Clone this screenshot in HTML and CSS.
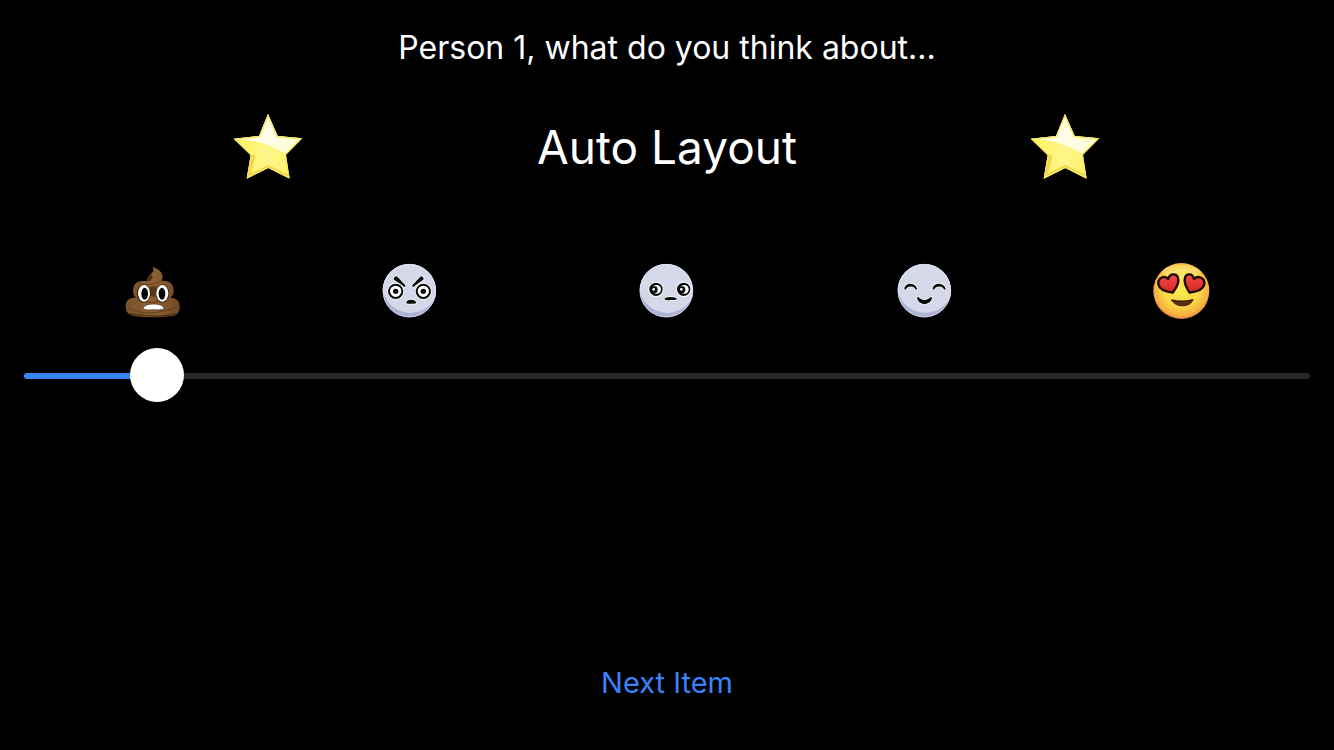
FILE: index.html
```html
<!DOCTYPE html>
<html lang="en">
<head>
<meta charset="utf-8">
<meta name="viewport" content="width=device-width, initial-scale=1">
<title>Auto Layout</title>
<link rel="stylesheet" href="styles.css">
</head>
<body>
<svg class="defs" aria-hidden="true">
  <defs>
    <linearGradient id="gold" x1="0" x2="1" y1="0" y2="0"><stop offset="0" stop-color="#fff25c"/><stop offset=".5" stop-color="#fff68a"/><stop offset="1" stop-color="#fff05c"/></linearGradient>
    <linearGradient id="shine" x1="0" x2="1" y1="0" y2="0"><stop offset="0" stop-color="#fffbe0"/><stop offset=".5" stop-color="#fffde6"/><stop offset="1" stop-color="#fffbd0"/></linearGradient>
    <radialGradient id="sun" cx=".5" cy=".45" r=".55"><stop offset="0" stop-color="#fbe94e"/><stop offset=".6" stop-color="#f9d745"/><stop offset=".88" stop-color="#f5b040"/><stop offset="1" stop-color="#ee8448"/></radialGradient>
    <linearGradient id="heart" x1="0" x2="0" y1="0" y2="1"><stop offset="0" stop-color="#f04a48"/><stop offset="1" stop-color="#d92323"/></linearGradient>
    <linearGradient id="brown" x1="0" x2="1" y1="0" y2="0"><stop offset="0" stop-color="#7a5129"/><stop offset=".5" stop-color="#8c6034"/><stop offset="1" stop-color="#734a23"/></linearGradient>
    <clipPath id="disc"><circle cx="112" cy="107" r="80"/></clipPath>
    <clipPath id="starshape"><path d="M131 27L160 93L234 100L185 149L196 221L132 189L67 221L79 151L28 101L104 93Z"/></clipPath>
  </defs>
  <symbol id="star" viewBox="26 24 210 201">
    <g clip-path="url(#starshape)">
      <path d="M26 24H236V225H26Z" fill="url(#gold)"/>
      <path d="M28 104Q112 100 185 149L240 95L131 20Z" fill="url(#shine)"/>
      <path d="M86 150L67 221L132 189L194 219" fill="none" stroke="#f3d44b" stroke-width="16"/>
      <path d="M131 27L160 93L234 100L185 149L196 221L132 189L67 221L79 151L28 101L104 93Z" fill="none" stroke="#f6e65b" stroke-width="8"/>
    </g>
  </symbol>
  <symbol id="moon" viewBox="0 0 225 225">
    <circle cx="112" cy="107" r="80" fill="#aeb1d4"/>
    <g clip-path="url(#disc)"><circle cx="115" cy="90" r="84" fill="#d5d8e9"/></g>
    <circle cx="112" cy="107" r="79" fill="none" stroke="#e6e8f3" stroke-width="2"/>
  </symbol>
</svg>
<main class="screen">
  <p class="prompt">Person 1, what do you think about...</p>
  <div class="subject">
    <svg class="star" aria-hidden="true"><use href="#star"/></svg>
    <h1 class="title" id="item">Auto Layout</h1>
    <svg class="star" aria-hidden="true"><use href="#star"/></svg>
  </div>
  <div class="faces">
    <svg class="face" viewBox="0 0 225 225" role="img" aria-label="Terrible">
      <path d="M113 36C140 45 148 60 140 78C162 75 175 88 175 101C178 113 173 123 166 128C186 129 194 139 194 153C195 174 184 184 163 184Q112 190 59 183C40 181 31 171 32 151C33 136 43 127 63 128C51 121 51 91 66 82C77 76 89 79 98 77Q94 65 114 51C117 45 113 41 113 36Z" fill="url(#brown)"/>
      <path d="M98 77Q93 65 109 58Q116 65 108 76Q102 80 92 78Z" fill="#543311"/>
      <path d="M69 83Q94 98 139 78M64 128Q91 150 132 139Q151 133 169 126M37 158Q83 181 133 171Q163 166 189 155" fill="none" stroke="#65411c" stroke-width="3"/>
      <path d="M104 96L124 93L119 127L105 122Z" fill="#573613"/>
      <path d="M41 176Q81 182 112 183Q153 185 184 177" fill="none" stroke="#4a2f16" stroke-width="4"/>
      <ellipse cx="86" cy="115" rx="21" ry="28" fill="#4b2c0c"/><ellipse cx="142" cy="115" rx="21" ry="28" fill="#4b2c0c"/>
      <ellipse cx="87" cy="115" rx="18" ry="25" fill="#fff"/><ellipse cx="142" cy="115" rx="18" ry="25" fill="#fff"/>
      <ellipse cx="89" cy="116" rx="10" ry="18" fill="#050505"/><ellipse cx="141" cy="116" rx="10" ry="18" fill="#050505"/>
      <path d="M83 162Q87 147 116 147Q145 147 148 162Q131 166 115 164Q97 167 83 162Z" fill="#fff" stroke="#4b2c0c" stroke-width="2"/>
    </svg>
    <svg class="face" viewBox="0 0 225 225" role="img" aria-label="Bad">
      <use href="#moon"/>
      <g stroke="#fff" stroke-width="4" paint-order="stroke">
        <path d="M66 68Q71 60 77 66L100 91Q103 97 96 95Q84 86 68 76Q63 73 66 68Z" fill="#0a0a0a"/>
        <path d="M154 68Q150 60 144 66L121 91Q118 97 125 95Q137 86 152 76Q157 73 154 68Z" fill="#0a0a0a"/>
        <path d="M102 144Q104 134 117 134Q131 134 133 144Q132 147 117 146Q103 147 102 144Z" fill="#0a0a0a"/>
      </g>
      <circle cx="71" cy="109" r="25" fill="#fff"/><circle cx="154" cy="109" r="25" fill="#fff"/>
      <circle cx="71" cy="109" r="20" fill="none" stroke="#0a0a0a" stroke-width="6"/><circle cx="154" cy="109" r="20" fill="none" stroke="#0a0a0a" stroke-width="6"/>
      <circle cx="71" cy="109" r="8" fill="#0a0a0a"/><circle cx="154" cy="109" r="8" fill="#0a0a0a"/>
    </svg>
    <svg class="face" viewBox="0 0 225 225" role="img" aria-label="Neutral">
      <use href="#moon"/>
      <circle cx="81" cy="103" r="23" fill="#fff"/><circle cx="164" cy="103" r="23" fill="#fff"/>
      <circle cx="81" cy="103" r="20" fill="#0a0a0a"/><circle cx="164" cy="103" r="20" fill="#0a0a0a"/>
      <circle cx="83" cy="103" r="13" fill="#fff"/><circle cx="166" cy="103" r="13" fill="#fff"/>
      <circle cx="76" cy="104" r="10" fill="#0a0a0a"/><circle cx="159" cy="104" r="10" fill="#0a0a0a"/>
      <circle cx="74" cy="103" r="4" fill="#fff"/><circle cx="157" cy="103" r="4" fill="#fff"/>
      <path d="M106 132Q108 126 124 126Q142 126 144 132Q143 136 125 135Q107 137 106 132Z" fill="#0a0a0a" stroke="#fff" stroke-width="4" paint-order="stroke"/>
    </svg>
    <svg class="face" viewBox="0 0 225 225" role="img" aria-label="Good">
      <use href="#moon"/>
      <g fill="#0a0a0a" stroke="#fff" stroke-width="4" paint-order="stroke">
        <path d="M52 101C54 82 85 80 90 101Q88 107 84 101C80 92 63 92 58 101Q54 107 52 101Z"/>
        <path d="M137 101C139 82 170 80 176 101Q174 107 170 101C164 92 149 92 143 101Q139 107 137 101Z"/>
        <path d="M90 128Q92 123 97 129Q112 141 128 129Q133 123 135 128C131 153 94 153 90 128Z"/>
      </g>
    </svg>
    <svg class="face" viewBox="0 0 225 225" role="img" aria-label="Love">
      <circle cx="112" cy="108" r="84" fill="url(#sun)"/>
      <ellipse cx="112" cy="50" rx="56" ry="20" fill="#fff1a0" opacity=".4"/>
      <g fill="url(#heart)" stroke="#1c0803" stroke-width="7" stroke-linejoin="round">
        <path d="M73 72C77 53 103 53 103 76C103 94 91 104 86 113C70 111 47 107 43 88C41 67 63 60 73 72Z"/>
        <path d="M150 72C146 53 122 53 122 76C122 94 132 104 137 113C154 111 177 107 181 88C183 67 160 60 150 72Z"/>
      </g>
      <path d="M82 135Q114 143 148 134C140 160 93 161 82 135Z" fill="#5b2d10"/>
      <path d="M82 135Q114 143 148 134" fill="none" stroke="#362008" stroke-width="4"/>
    </svg>
  </div>
  <input class="slider" type="range" min="0" max="100" step="any" value="8.6" aria-labelledby="item" style="--value: 8.6%">
  <button class="next" type="button">Next Item</button>
</main>
</body>
</html>
```
FILE: styles.css
```css
* {
  box-sizing: border-box;
}

body {
  margin: 0;
  background: #000;
  color: #fff;
  font-family: Inter, "Liberation Sans", sans-serif;
}

.defs {
  position: absolute;
  width: 0;
  height: 0;
}

.screen {
  display: flex;
  flex-direction: column;
  min-height: 100vh;
  padding: 28px 0 49px;
}

.prompt {
  margin: 0;
  font-size: 32px;
  line-height: 40px;
  text-align: center;
}

.subject {
  display: flex;
  justify-content: space-evenly;
  align-items: center;
  margin-top: 45px;
}

.star {
  width: 70px;
  height: 67px;
}

.title {
  margin: 0;
  font-size: 46px;
  font-weight: 400;
  line-height: 56px;
}

.faces {
  display: grid;
  grid-template-columns: repeat(5, 1fr);
  justify-items: center;
  margin-top: 75px;
  padding: 0 24px;
}

.face {
  width: 75px;
  height: 75px;
}

.slider {
  appearance: none;
  height: 54px;
  margin: 19px 24px 0;
  background: transparent;
}

.slider::-webkit-slider-runnable-track {
  height: 6px;
  border-radius: 3px;
  background: linear-gradient(to right, #3a82f7 var(--value), #29292a var(--value));
}

.slider::-webkit-slider-thumb {
  appearance: none;
  width: 54px;
  height: 54px;
  margin-top: -25px;
  border-radius: 50%;
  background: #fff;
}

.next {
  align-self: center;
  margin-top: auto;
  padding: 0;
  border: 0;
  background: none;
  color: #3a82f7;
  font-family: inherit;
  font-size: 29px;
  line-height: 36px;
}
```
